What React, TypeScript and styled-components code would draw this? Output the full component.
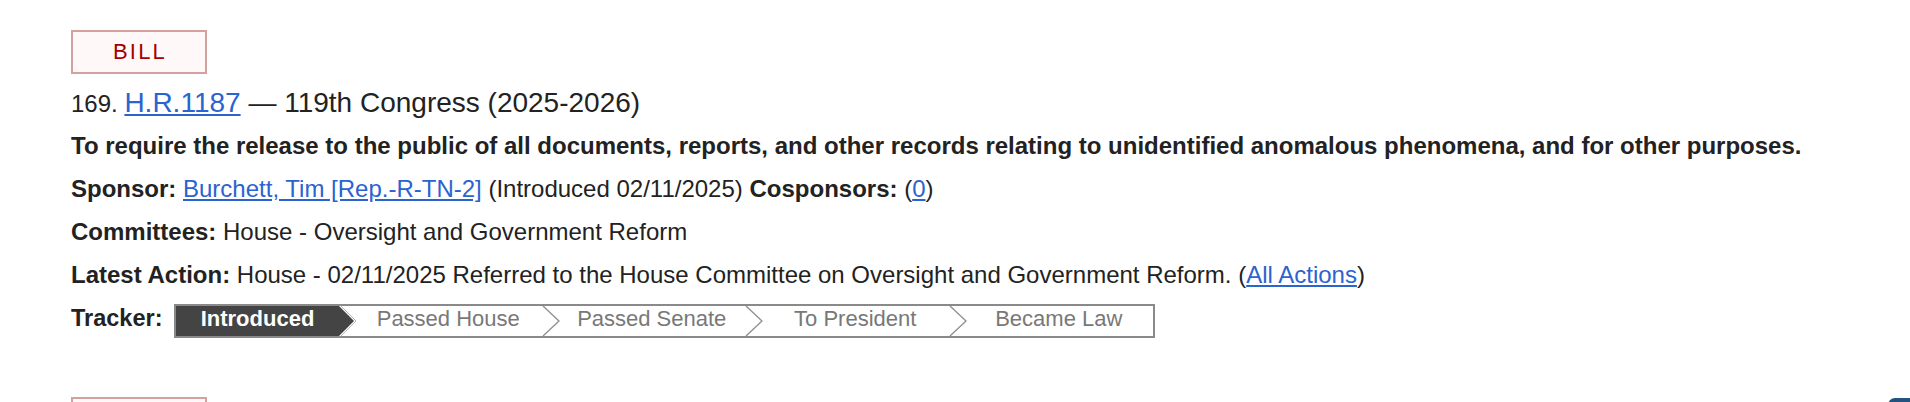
import React from "react";
import styled, { createGlobalStyle } from "styled-components";

const GlobalStyle = createGlobalStyle`
  html, body { margin: 0; padding: 0; background: #fff; }
  body { font-family: "Liberation Sans", Arial, Helvetica, sans-serif; color: #222; overflow: hidden; }
`;

const Page = styled.main`
  padding: 30px 0 0 71px;
  height: 402px;
  box-sizing: border-box;
  overflow: hidden;
`;

const ResultList = styled.ol`
  list-style: none;
  margin: 0;
  padding: 0;
`;

const ResultItem = styled.li`
  display: flex;
  flex-direction: column;
  align-items: flex-start;
  margin-bottom: 59px;
`;

const Badge = styled.span`
  box-sizing: border-box;
  display: flex;
  align-items: center;
  justify-content: center;
  width: 136px;
  height: 44px;
  border: 2px solid #d4a1a1;
  background: #fff8f8;
  color: #a50000;
  font-size: 22px;
  letter-spacing: 2.2px;
  padding-left: 2px;
`;

const Heading = styled.div`
  margin-top: 12px;
  font-size: 28px;
  line-height: 34px;
  color: #222;
  white-space: nowrap;
`;

const Counter = styled.span`
  font-size: 24px;
`;

const Link = styled.a`
  color: #2b63cf;
  text-decoration: underline;
  text-underline-offset: 2px;
`;

const Title = styled.div`
  margin-top: 8px;
  font-size: 24px;
  line-height: 34px;
  font-weight: 700;
  white-space: nowrap;
`;

const Row = styled.div`
  margin-top: 9px;
  font-size: 24px;
  line-height: 34px;
  white-space: nowrap;
`;

const Label = styled.strong`
  font-weight: 700;
`;

const TrackerRow = styled.div`
  margin-top: 12px;
  display: flex;
  align-items: flex-start;
`;

const TrackerLabel = styled.strong`
  font-size: 23.5px;
  line-height: 28px;
  font-weight: 700;
  width: 103px;
`;

const Steps = styled.ol`
  list-style: none;
  margin: 0;
  padding: 0;
  display: flex;
  border: 2px solid #8a8a8a;
  height: 30px;
`;

const Step = styled.li<{ $current?: boolean; $first?: boolean }>`
  position: relative;
  box-sizing: border-box;
  width: ${(p) => (p.$first ? "163px" : "203.5px")};
  padding: 0 0 4px ${(p) => (p.$first ? "0" : "15px")};
  height: 30px;
  display: flex;
  justify-content: center;
  font-size: 22px;
  line-height: 26px;
  font-weight: ${(p) => (p.$current ? 700 : 400)};
  color: ${(p) => (p.$current ? "#fff" : "#787878")};
  background: ${(p) => (p.$current ? "#444" : "transparent")};
  white-space: nowrap;
`;

const Chevron = styled.svg`
  position: absolute;
  top: 0;
  left: 100%;
  width: 18px;
  height: 30px;
  overflow: visible;
  z-index: 1;
`;

const BackToTop = styled.a`
  position: fixed;
  left: 1888px;
  top: 398px;
  width: 44px;
  height: 44px;
  border-radius: 7px;
  background: #22527d;
`;

const steps = ["Introduced", "Passed House", "Passed Senate", "To President", "Became Law"];

function Tracker({ current }: { current: number }) {
  return (
    <Steps>
      {steps.map((s, i) => (
        <Step key={s} $current={i === current} $first={i === 0}>
          {s}
          {i < steps.length - 1 &&
            (i === current ? (
              <Chevron viewBox="0 0 18 30">
                <polygon points="0,0 15,15 0,30" fill="#444" />
                <polyline points="1.5,-0.5 17,15 1.5,30.5" fill="none" stroke="#b5b5b5" strokeWidth="1" />
              </Chevron>
            ) : (
              <Chevron viewBox="0 0 18 30">
                <polyline points="0,0 16,15 0,30" fill="none" stroke="#8e8e8e" strokeWidth="1.3" />
              </Chevron>
            ))}
        </Step>
      ))}
    </Steps>
  );
}

export default function App() {
  return (
    <>
      <GlobalStyle />
      <Page>
        <ResultList>
          <ResultItem>
            <Badge>BILL</Badge>
            <Heading>
              <Counter>169. </Counter>
              <Link href="#">H.R.1187</Link> — 119th Congress (2025-2026)
            </Heading>
            <Title>
              To require the release to the public of all documents, reports, and other records relating to
              unidentified anomalous phenomena, and for other purposes.
            </Title>
            <Row>
              <Label>Sponsor:</Label> <Link href="#">Burchett, Tim [Rep.-R-TN-2]</Link> (Introduced 02/11/2025){" "}
              <Label>Cosponsors:</Label> (<Link href="#">0</Link>)
            </Row>
            <Row>
              <Label>Committees:</Label> House - Oversight and Government Reform
            </Row>
            <Row>
              <Label>Latest Action:</Label> House - 02/11/2025 Referred to the House Committee on Oversight and
              Government Reform. (<Link href="#">All Actions</Link>)
            </Row>
            <TrackerRow>
              <TrackerLabel>Tracker:</TrackerLabel>
              <Tracker current={0} />
            </TrackerRow>
          </ResultItem>
          <ResultItem>
            <Badge aria-label="BILL" />
          </ResultItem>
        </ResultList>
      </Page>
      <BackToTop href="#" aria-label="Back to top" />
    </>
  );
}
